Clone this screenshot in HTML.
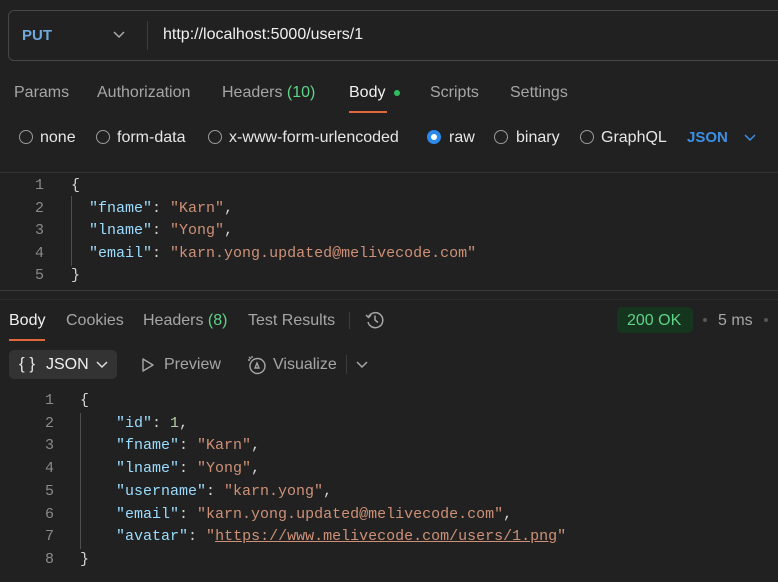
<!DOCTYPE html>
<html><head><meta charset="utf-8"><style>
*{margin:0;padding:0;box-sizing:border-box}
body{width:778px;height:582px;background:#212121;overflow:hidden;position:relative;font-family:"Liberation Sans",sans-serif;color:#e6e6e6}
.a{position:absolute;white-space:pre}
.t{font-size:16px;color:#a6a6a6;top:84px}
.rt{font-size:16px;color:#a6a6a6;top:312px}
.g{color:#5fd386}
.rad{position:absolute;width:14px;height:14px;border:1px solid #9a9a9a;border-radius:50%;top:130px}
.rl{font-size:16px;color:#e6e6e6;top:129px}
.mono{font-family:"Liberation Mono",monospace;font-size:15px}
.ln{color:#8a8a8a;text-align:right;width:20px}
.k{color:#9cdcfe}.s{color:#ce9178}.p{color:#d4d4d4}.n{color:#b5cea8}
</style></head><body>
<div class="a" style="left:8px;top:10px;width:790px;height:51px;border:1px solid #474747;border-radius:6px"></div>
<div class="a" style="left:22px;top:27px;font-size:15px;font-weight:bold;color:#6ea8dc">PUT</div>
<svg class="a" style="left:112px;top:30px" width="14" height="10"><path d="M2 2l5 5 5-5" stroke="#aaa" stroke-width="1.5" fill="none"/></svg>
<div class="a" style="left:147px;top:21px;width:1px;height:29px;background:#3c3c3c"></div>
<div class="a" style="left:163px;top:26px;font-size:16px;color:#f0f0f0">http://localhost:5000/users/1</div>

<div class="a t" style="left:14px">Params</div>
<div class="a t" style="left:97px">Authorization</div>
<div class="a t" style="left:222px">Headers <span class="g">(10)</span></div>
<div class="a t" style="left:349px;color:#f0f0f0">Body</div>
<div class="a" style="left:394px;top:90px;width:6px;height:6px;border-radius:50%;background:#2fbf5f"></div>
<div class="a t" style="left:430px">Scripts</div>
<div class="a t" style="left:510px">Settings</div>
<div class="a" style="left:349px;top:111px;width:38px;height:2px;background:#e0683a"></div>

<div class="rad" style="left:19px"></div><div class="a rl" style="left:40px">none</div>
<div class="rad" style="left:96px"></div><div class="a rl" style="left:117px">form-data</div>
<div class="rad" style="left:208px"></div><div class="a rl" style="left:229px">x-www-form-urlencoded</div>
<div class="rad" style="left:427px;border:4px solid #2b8aea;background:#fff"></div><div class="a rl" style="left:449px">raw</div>
<div class="rad" style="left:494px"></div><div class="a rl" style="left:516px">binary</div>
<div class="rad" style="left:580px"></div><div class="a rl" style="left:601px">GraphQL</div>
<div class="a" style="left:687px;top:129px;font-size:15px;font-weight:bold;color:#3d8fe6">JSON</div>
<svg class="a" style="left:743px;top:133px" width="14" height="10"><path d="M2 2l5 5 5-5" stroke="#3d8fe6" stroke-width="1.5" fill="none"/></svg>

<div class="a" style="left:0;top:172px;width:778px;height:1px;background:#343434"></div>
<div class="a" style="left:71px;top:196px;width:1px;height:70px;background:#505050"></div>
<div class="a mono" style="left:24px;top:175px;line-height:22.5px"><div class="ln">1</div><div class="ln">2</div><div class="ln">3</div><div class="ln">4</div><div class="ln">5</div></div>
<div class="a mono" style="left:71px;top:175px;line-height:22.5px"><span class="p">{</span>
  <span class="k">"fname"</span><span class="p">: </span><span class="s">"Karn"</span><span class="p">,</span>
  <span class="k">"lname"</span><span class="p">: </span><span class="s">"Yong"</span><span class="p">,</span>
  <span class="k">"email"</span><span class="p">: </span><span class="s">"karn.yong.updated@melivecode.com"</span>
<span class="p">}</span></div>

<div class="a" style="left:0;top:290px;width:778px;height:1px;background:#3a3a3a"></div>
<div class="a" style="left:0;top:299px;width:778px;height:1px;background:#2c2c2c"></div>
<div class="a rt" style="left:9px;color:#f0f0f0">Body</div>
<div class="a rt" style="left:66px">Cookies</div>
<div class="a rt" style="left:143px">Headers <span class="g">(8)</span></div>
<div class="a rt" style="left:248px">Test Results</div>
<div class="a" style="left:349px;top:312px;width:1px;height:17px;background:#3c3c3c"></div>
<svg class="a" style="left:364px;top:309px" width="22" height="22" viewBox="0 0 22 22" fill="none" stroke="#a6a6a6" stroke-width="1.5"><path d="M4.5 8A7.5 7.5 0 1 1 4 13"/><path d="M2 6l2.5 2.5L7 6"/><path d="M11 6.5V11l3 2.5"/></svg>
<div class="a" style="left:9px;top:339px;width:36px;height:2px;background:#e0683a"></div>
<div class="a" style="left:617px;top:307px;width:76px;height:26px;border-radius:5px;background:#16351f"></div>
<div class="a" style="left:627px;top:312px;font-size:16px;color:#5fd386">200 OK</div>
<div class="a" style="left:703px;top:318px;width:4px;height:4px;border-radius:50%;background:#555"></div>
<div class="a" style="left:718px;top:312px;font-size:16px;color:#a6a6a6">5 ms</div>
<div class="a" style="left:764px;top:318px;width:4px;height:4px;border-radius:50%;background:#555"></div>

<div class="a" style="left:9px;top:350px;width:108px;height:29px;border-radius:5px;background:#333"></div>
<div class="a" style="left:19px;top:354px;font-size:17px;color:#e6e6e6">{ }</div>
<div class="a" style="left:46px;top:356px;font-size:16px;color:#f0f0f0">JSON</div>
<svg class="a" style="left:95px;top:360px" width="14" height="10"><path d="M2 2l5 5 5-5" stroke="#ddd" stroke-width="1.5" fill="none"/></svg>
<svg class="a" style="left:140px;top:357px" width="16" height="16"><path d="M3 2l10 6-10 6z" stroke="#a6a6a6" stroke-width="1.4" fill="none" stroke-linejoin="round"/></svg>
<div class="a" style="left:164px;top:356px;font-size:16px;color:#a6a6a6">Preview</div>
<svg class="a" style="left:246px;top:354px" width="22" height="22" fill="none" stroke="#a6a6a6" stroke-width="1.4"><circle cx="11.5" cy="12" r="7.5"/><path d="M11 9l-2 5h4z"/><path d="M3 3l2 2M6 2v2M2 6h2"/></svg>
<div class="a" style="left:273px;top:356px;font-size:16px;color:#a6a6a6">Visualize</div>
<div class="a" style="left:346px;top:355px;width:1px;height:19px;background:#3c3c3c"></div>
<svg class="a" style="left:355px;top:360px" width="14" height="10"><path d="M2 2l5 5 5-5" stroke="#a6a6a6" stroke-width="1.5" fill="none"/></svg>

<div class="a" style="left:80px;top:413px;width:1px;height:136px;background:#505050"></div>
<div class="a mono" style="left:34px;top:390px;line-height:22.7px;font-size:15px"><div class="ln">1</div><div class="ln">2</div><div class="ln">3</div><div class="ln">4</div><div class="ln">5</div><div class="ln">6</div><div class="ln">7</div><div class="ln">8</div></div>
<div class="a mono" style="left:80px;top:390px;line-height:22.7px;font-size:15px"><span class="p">{</span>
    <span class="k">"id"</span><span class="p">: </span><span class="n">1</span><span class="p">,</span>
    <span class="k">"fname"</span><span class="p">: </span><span class="s">"Karn"</span><span class="p">,</span>
    <span class="k">"lname"</span><span class="p">: </span><span class="s">"Yong"</span><span class="p">,</span>
    <span class="k">"username"</span><span class="p">: </span><span class="s">"karn.yong"</span><span class="p">,</span>
    <span class="k">"email"</span><span class="p">: </span><span class="s">"karn.yong.updated@melivecode.com"</span><span class="p">,</span>
    <span class="k">"avatar"</span><span class="p">: </span><span class="s">"<u>https://www.melivecode.com/users/1.png</u>"</span>
<span class="p">}</span></div>
</body></html>
